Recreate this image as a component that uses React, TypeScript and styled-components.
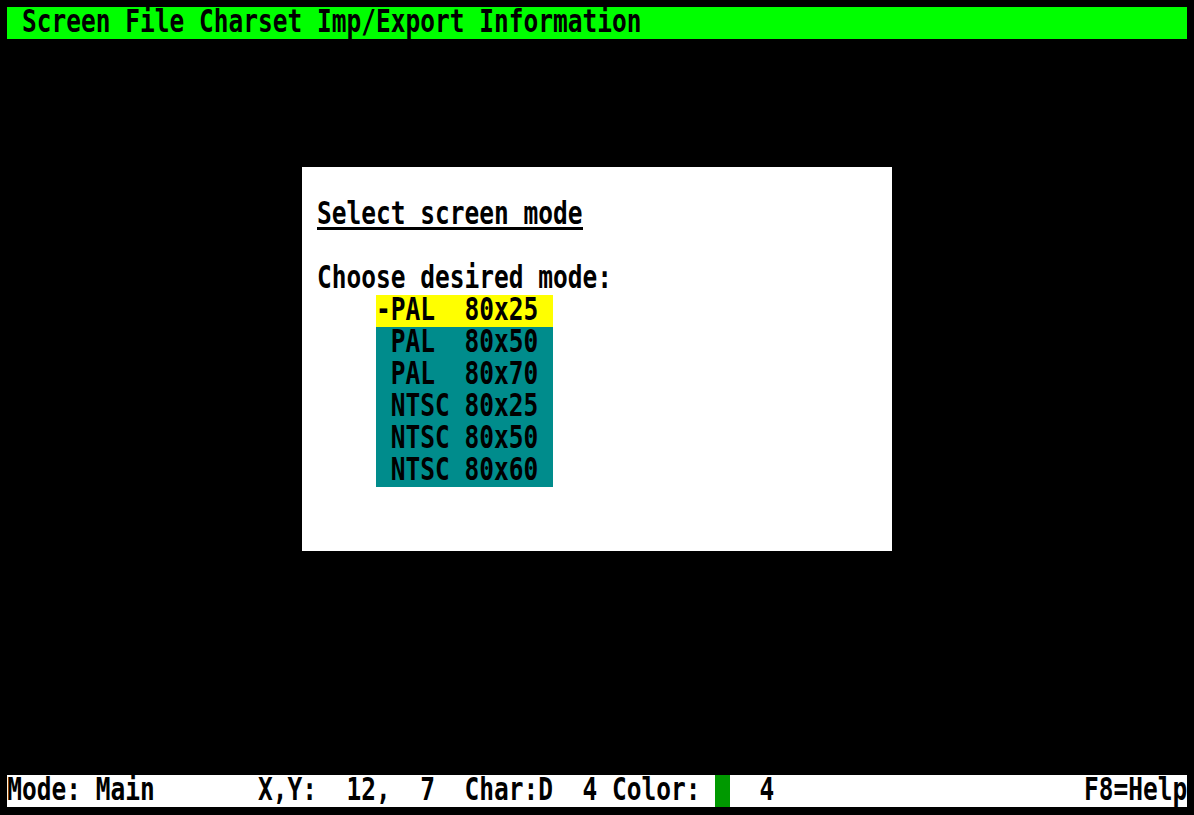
import React from "react";
import styled, { createGlobalStyle } from "styled-components";

const CELL_W = 14.75;
const ROW_H = 32;

const Global = createGlobalStyle`
  html, body {
    margin: 0;
    padding: 0;
    background: #000;
    width: 1194px;
    height: 815px;
    overflow: hidden;
  }
  body {
    font-family: "DejaVu Sans Mono", "Liberation Mono", monospace;
    font-weight: bold;
    font-size: 24.5px;
    color: #000;
  }
`;

const Screen = styled.div`
  box-sizing: border-box;
  width: 1194px;
  height: 815px;
  padding: 6.7px 0 0 7.3px;
  display: flex;
  flex-direction: column;
  background: #000;
`;

/* Tall, narrow character cells: glyphs stretched vertically to fill the 32px row */
const Glyphs = styled.span`
  display: inline-block;
  align-self: flex-start;
  height: 22px;
  line-height: 22px;
  margin-top: 0.35px;
  white-space: pre;
  transform: scaleY(1.316);
  transform-origin: 0 0;
`;

const MenuBar = styled.div`
  width: ${80 * CELL_W}px;
  height: ${ROW_H}px;
  background: #00ff00;
  display: flex;
`;

const Desktop = styled.div`
  width: ${80 * CELL_W}px;
  height: ${23 * ROW_H}px;
  display: flex;
  flex-direction: column;
`;

const Dialog = styled.div`
  box-sizing: border-box;
  margin-top: ${4 * ROW_H}px;
  margin-left: ${20 * CELL_W}px;
  width: ${40 * CELL_W}px;
  height: ${12 * ROW_H}px;
  background: #fff;
  padding: ${ROW_H}px 0 0 ${CELL_W}px;
  display: flex;
  flex-direction: column;
`;

const Line = styled.div`
  height: ${ROW_H}px;
  display: flex;
`;

const Title = styled.div`
  height: ${ROW_H}px;
  display: flex;
  background: linear-gradient(#000, #000) 0 28px / 100% 3px no-repeat;
`;

const ModeList = styled.div`
  margin-left: ${4 * CELL_W}px;
  display: flex;
  flex-direction: column;
`;

const ModeItem = styled.div<{ $selected?: boolean }>`
  width: ${12 * CELL_W}px;
  height: ${ROW_H}px;
  background: ${(p) => (p.$selected ? "#ffff00" : "#008c8c")};
  display: flex;
`;

const StatusBar = styled.div`
  width: ${80 * CELL_W}px;
  height: ${ROW_H}px;
  background: #fff;
  display: flex;
`;

const Swatch = styled.div<{ $color: string }>`
  width: ${CELL_W}px;
  height: ${ROW_H}px;
  background: ${(p) => p.$color};
`;

const Spacer = styled.div`
  flex: 1;
`;

const modes = [
  { label: "PAL  80x25", selected: true },
  { label: "PAL  80x50" },
  { label: "PAL  80x70" },
  { label: "NTSC 80x25" },
  { label: "NTSC 80x50" },
  { label: "NTSC 80x60" },
];

export default function App() {
  return (
    <>
      <Global />
      <Screen>
        <MenuBar>
          <Glyphs>{" Screen File Charset Imp/Export Information"}</Glyphs>
        </MenuBar>
        <Desktop>
          <Dialog>
            <Line>
              <Title>
                <Glyphs>Select screen mode</Glyphs>
              </Title>
            </Line>
            <Line />
            <Line>
              <Glyphs>Choose desired mode:</Glyphs>
            </Line>
            <ModeList>
              {modes.map((m) => (
                <ModeItem key={m.label} $selected={m.selected}>
                  <Glyphs>{(m.selected ? "-" : " ") + m.label}</Glyphs>
                </ModeItem>
              ))}
            </ModeList>
          </Dialog>
        </Desktop>
        <StatusBar>
          <Glyphs>{"Mode: Main       X,Y:  12,  7  Char:D  4 Color: "}</Glyphs>
          <Swatch $color="#009900" />
          <Glyphs>{"  4"}</Glyphs>
          <Spacer />
          <Glyphs>F8=Help</Glyphs>
        </StatusBar>
      </Screen>
    </>
  );
}
